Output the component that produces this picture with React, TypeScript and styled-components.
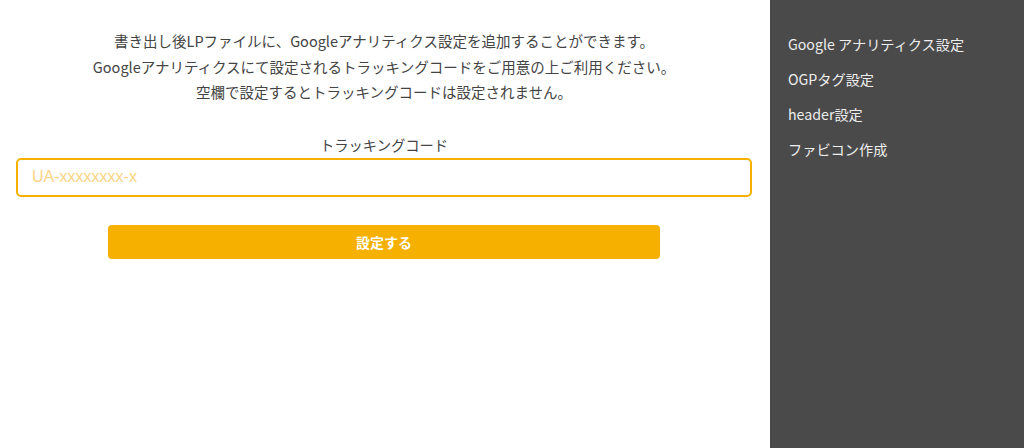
import React from "react";
import styled, { createGlobalStyle } from "styled-components";

const GlobalStyle = createGlobalStyle`
  html, body { margin: 0; padding: 0; }
  body {
    font-family: "Noto Sans CJK JP", "Noto Sans", sans-serif;
    background: #ffffff;
  }
  * { box-sizing: border-box; }
`;

const Layout = styled.div`
  display: flex;
  width: 1024px;
  height: 448px;
`;

const Main = styled.main`
  width: 770px;
  padding: 28px 18px 0 16px;
  display: flex;
  flex-direction: column;
  align-items: center;
`;

const Intro = styled.p`
  margin: 0;
  text-align: center;
  font-size: 14.5px;
  line-height: 25.5px;
  color: #444;
`;

const Field = styled.div`
  width: 100%;
  margin-top: 30px;
  display: flex;
  flex-direction: column;
  align-items: center;
`;

const Label = styled.label`
  font-size: 14.3px;
  color: #444;
  line-height: 20px;
  margin-bottom: 3px;
`;

const Input = styled.input`
  width: 100%;
  height: 39px;
  border: 2px solid #f5b000;
  border-radius: 5px;
  padding: 0 14px;
  font-family: "Liberation Sans", Arial, sans-serif;
  font-size: 16px;
  color: #333;
  outline: none;
  &::placeholder { color: #fcd488; }
`;

const Button = styled.button`
  margin-top: 28px;
  width: 75%;
  height: 34px;
  border: none;
  border-radius: 4px;
  background: #f5b000;
  color: #fff;
  font-family: "Noto Sans CJK JP", sans-serif;
  font-size: 14px;
  font-weight: 700;
`;

const Sidebar = styled.nav`
  flex: 1;
  background: #4a4a4a;
  padding: 34px 18px 0 18px;
  display: flex;
  flex-direction: column;
  gap: 15px;
`;

const NavItem = styled.a`
  color: #eeeeee;
  font-size: 14.2px;
  line-height: 20px;
  text-decoration: none;
`;

export default function App() {
  return (
    <>
      <GlobalStyle />
      <Layout>
        <Main>
          <Intro>
            書き出し後LPファイルに、Googleアナリティクス設定を追加することができます。
            <br />
            Googleアナリティクスにて設定されるトラッキングコードをご用意の上ご利用ください。
            <br />
            空欄で設定するとトラッキングコードは設定されません。
          </Intro>
          <Field>
            <Label>トラッキングコード</Label>
            <Input placeholder="UA-xxxxxxxx-x" />
            <Button>設定する</Button>
          </Field>
        </Main>
        <Sidebar>
          <NavItem>Google アナリティクス設定</NavItem>
          <NavItem>OGPタグ設定</NavItem>
          <NavItem>header設定</NavItem>
          <NavItem>ファビコン作成</NavItem>
        </Sidebar>
      </Layout>
    </>
  );
}
